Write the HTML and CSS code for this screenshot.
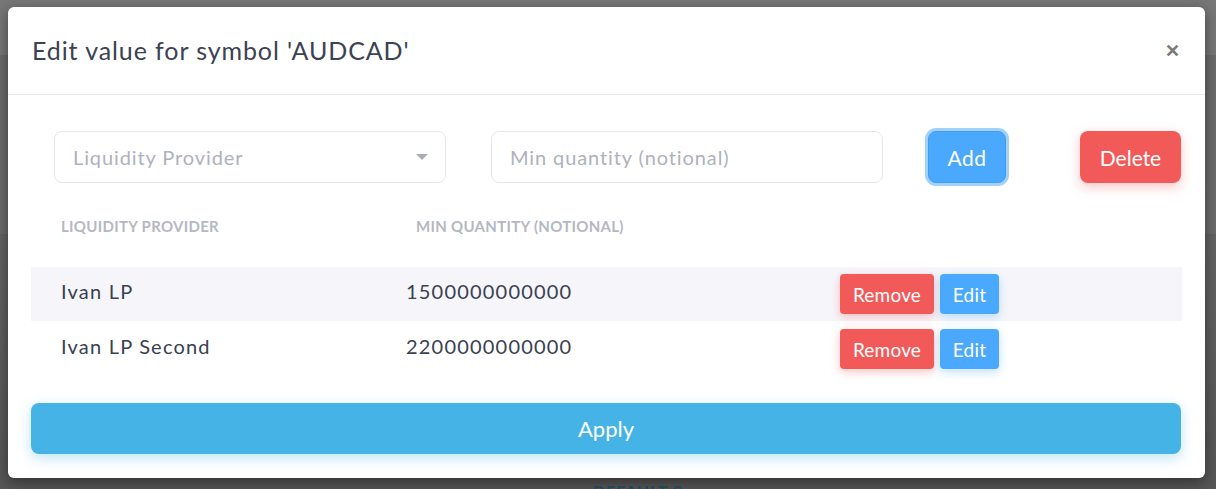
FILE: index.html
```html
<!DOCTYPE html>
<html>
<head>
<meta charset="utf-8">
<link rel="stylesheet" href="styles.css">
</head>
<body>
<div class="page">
  <div class="bg-top"></div>
  <div class="bg-mid"></div>
  <div class="bg-low"><span class="bg-text">DEFAULT 0</span></div>
</div>
<div class="overlay">
  <div class="modal">
    <div class="modal-header">
      <h2 class="modal-title">Edit value for symbol 'AUDCAD'</h2>
      <span class="close">&#x2715;</span>
    </div>
    <div class="modal-body">
      <div class="form-row">
        <div class="select">
          <span class="placeholder">Liquidity Provider</span>
          <span class="caret"></span>
        </div>
        <div class="input"><span class="placeholder">Min quantity (notional)</span></div>
        <button class="btn btn-add">Add</button>
        <button class="btn btn-delete">Delete</button>
      </div>
      <div class="table">
        <div class="thead">
          <div class="th th-1">Liquidity Provider</div>
          <div class="th th-2">Min Quantity (notional)</div>
        </div>
        <div class="tr tr-odd">
          <div class="td td-1">Ivan LP</div>
          <div class="td td-2">1500000000000</div>
          <div class="td td-3"><button class="sbtn sbtn-remove">Remove</button><button class="sbtn sbtn-edit">Edit</button></div>
        </div>
        <div class="tr">
          <div class="td td-1">Ivan LP Second</div>
          <div class="td td-2">2200000000000</div>
          <div class="td td-3"><button class="sbtn sbtn-remove">Remove</button><button class="sbtn sbtn-edit">Edit</button></div>
        </div>
      </div>
      <button class="btn-apply">Apply</button>
    </div>
  </div>
</div>
</body>
</html>
```

FILE: styles.css
```css
* { box-sizing: border-box; }
html, body { margin: 0; padding: 0; }
body {
  width: 1216px;
  height: 489px;
  overflow: hidden;
  font-family: "Lato", "Noto Sans", sans-serif;
  background: #5a5a5a;
  position: relative;
}
.page { display: flex; flex-direction: column; height: 489px; }
.bg-top { height: 55px; background: #777777; }
.bg-mid { height: 180px; background: #6b6b6b; border-bottom: 1px solid #626262; }
.bg-low { flex: 1; background: linear-gradient(#646464, #565656); display: flex; align-items: flex-end; justify-content: center; }
.bg-text { font-weight: 700; color: #254f63; font-size: 16px; line-height: 16px; margin-bottom: -10px; margin-left: 60px; letter-spacing: 1px; }

.overlay { position: absolute; inset: 0; }
.modal {
  position: absolute;
  left: 8px; top: 7px;
  width: 1197px; height: 471px;
  background: #fff;
  border-radius: 6px;
  box-shadow: 0 4px 14px rgba(0,0,0,0.45);
  display: flex; flex-direction: column;
}
.modal-header {
  height: 88px;
  border-bottom: 1px solid #e9e9ec;
  display: flex; align-items: center; justify-content: space-between;
  padding: 0 25px 0 24px;
}
.modal-title {
  margin: 0;
  font-weight: 400;
  font-size: 25px;
  color: #3b4252;
  letter-spacing: 0.9px;
  padding-bottom: 2px;
}
.close { color: #7a7a7a; font-size: 18px; font-weight: 700; padding-bottom: 2px; }

.modal-body { padding: 36px 23px 0 23px; display: flex; flex-direction: column; }
.form-row { display: flex; align-items: center; height: 52px; padding-left: 23px; }
.select, .input {
  width: 392px; height: 52px;
  border: 1px solid #e7e7eb;
  border-radius: 8px;
  display: flex; align-items: center; justify-content: space-between;
  padding: 0 17px 0 18px;
}
.input { margin-left: 45px; }
.placeholder { color: #aeb2bd; font-size: 20px; letter-spacing: 0.9px; }
.caret { width: 0; height: 0; border-left: 6px solid transparent; border-right: 6px solid transparent; border-top: 6px solid #a8acb6; }
.btn {
  height: 52px; border: none; border-radius: 8px; color: #fff;
  font-family: inherit; font-size: 21px; padding: 0;
}
.btn-add {
  margin-left: 45px; width: 78px;
  background: #4aa8fd;
  box-shadow: 0 0 0 3px #a3d1fb;
  border: 1px solid #3f9ef2;
  letter-spacing: 0.5px;
}
.btn-delete {
  margin-left: 74px; width: 101px;
  background: #f25a5a;
  box-shadow: 0 4px 12px rgba(242, 90, 90, 0.35);
}

.table { margin-top: 27px; }
.thead { display: flex; height: 32px; align-items: center; margin-bottom: 25px; }
.th { font-size: 15px; font-weight: 700; color: #b5b8c2; text-transform: uppercase; letter-spacing: 0.3px; }
.th-1 { width: 385px; padding-left: 30px; }
.tr { display: flex; height: 56px; align-items: center; }
.tr-odd { background: #f6f6fa; height: 54px; margin-top: 1px; }
.td { font-size: 20px; color: #3a4151; letter-spacing: 1.2px; }
.td-1 { width: 375px; padding-left: 30px; padding-bottom: 6px; }
.td-2 { width: 434px; padding-bottom: 6px; }
.td-3 { display: flex; gap: 6px; }
.sbtn {
  height: 40px; border: none; border-radius: 4px; color: #fff;
  font-family: inherit; font-size: 19px; padding: 0; letter-spacing: 0.2px;
}
.sbtn-remove { width: 94px; background: #f25a5a; box-shadow: 0 3px 10px rgba(242,90,90,0.35); }
.sbtn-edit { width: 59px; background: #4aa8fd; box-shadow: 0 3px 10px rgba(74,168,253,0.35); }

.btn-apply {
  margin-top: 26px;
  height: 51px; width: 1150px;
  border: none; border-radius: 8px;
  background: #45b3e6; color: #fff;
  font-family: inherit; font-size: 22px;
  box-shadow: 0 4px 14px rgba(69,179,230,0.35);
}
```
